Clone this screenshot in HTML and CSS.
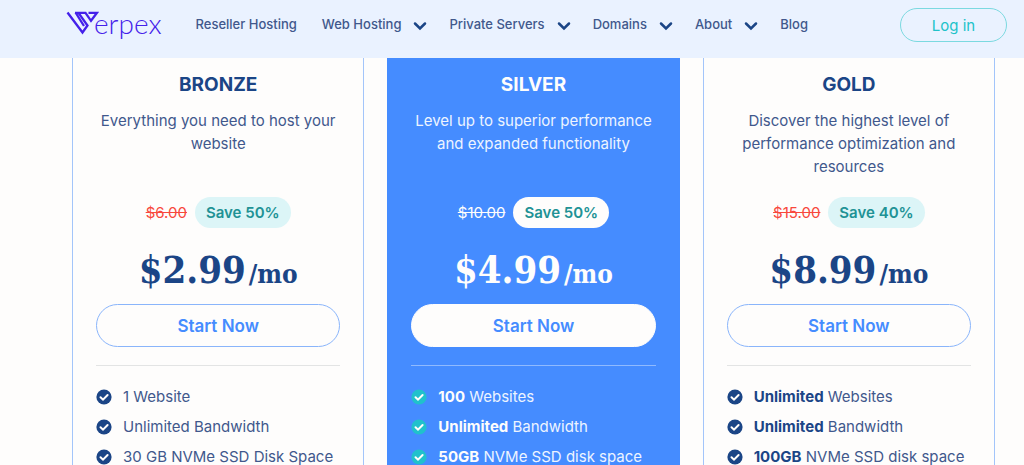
FILE: index.html
```html
<!DOCTYPE html>
<html lang="en">

<head>
    <meta charset="UTF-8">
    <meta name="viewport" content="width=device-width, initial-scale=1.0">
    <title>Verpex Hosting</title>
    <link rel="stylesheet" href="styles.css">
</head>

<body>
    <svg class="sprite" aria-hidden="true">
        <symbol id="chevron" viewBox="0 0 14 10">
            <path d="M2 2.500 7 7.500l5-5" fill="none" stroke="currentColor" stroke-width="2.500" stroke-linecap="round" />
        </symbol>
        <symbol id="check" viewBox="0 0 16 16">
            <circle cx="8" cy="8" r="7.600" fill="currentColor" />
            <path d="M4.500 8.200 7 10.600l4.600-4.600" fill="none" stroke="#fffdfb" stroke-width="2" stroke-linecap="round" />
        </symbol>
    </svg>

    <header class="header">
        <a class="logo" href="#" aria-label="Verpex">
            <svg class="logo-mark" viewBox="0 0 33 24">
                <path d="M1.500 1.500 16.500 21.500 21.500 14.500 12.500 1.800M9.500 1.500 18 15M9 1.800h10.500l5.500 8 6-8h-8.500" fill="none" stroke="currentColor" stroke-width="2.300" />
            </svg>
            <span class="logo-text">erpex</span>
        </a>
        <nav class="nav">
            <a href="#">Reseller Hosting</a>
            <a href="#">Web Hosting <svg class="chevron"><use href="#chevron" /></svg></a>
            <a href="#">Private Servers <svg class="chevron"><use href="#chevron" /></svg></a>
            <a href="#">Domains <svg class="chevron"><use href="#chevron" /></svg></a>
            <a href="#">About <svg class="chevron"><use href="#chevron" /></svg></a>
            <a href="#">Blog</a>
        </nav>
        <button class="login" type="button">Log in</button>
    </header>

    <main class="plans">
        <section class="plan">
            <h2>BRONZE</h2>
            <p class="desc">Everything you need to host your website</p>
            <div class="offer"><del>$6.00</del><span class="save">Save 50%</span></div>
            <div class="price">$2.99<span>/mo</span></div>
            <button class="start" type="button">Start Now</button>
            <ul class="features">
                <li><svg class="check"><use href="#check" /></svg><span>1 Website</span></li>
                <li><svg class="check"><use href="#check" /></svg><span>Unlimited Bandwidth</span></li>
                <li><svg class="check"><use href="#check" /></svg><span>30 GB NVMe SSD Disk Space</span></li>
            </ul>
        </section>
        <section class="plan featured">
            <h2>SILVER</h2>
            <p class="desc">Level up to superior performance and expanded functionality</p>
            <div class="offer"><del>$10.00</del><span class="save">Save 50%</span></div>
            <div class="price">$4.99<span>/mo</span></div>
            <button class="start" type="button">Start Now</button>
            <ul class="features">
                <li><svg class="check"><use href="#check" /></svg><span><b>100</b> Websites</span></li>
                <li><svg class="check"><use href="#check" /></svg><span><b>Unlimited</b> Bandwidth</span></li>
                <li><svg class="check"><use href="#check" /></svg><span><b>50GB</b> NVMe SSD disk space</span></li>
            </ul>
        </section>
        <section class="plan">
            <h2>GOLD</h2>
            <p class="desc">Discover the highest level of performance optimization and resources</p>
            <div class="offer"><del>$15.00</del><span class="save">Save 40%</span></div>
            <div class="price">$8.99<span>/mo</span></div>
            <button class="start" type="button">Start Now</button>
            <ul class="features">
                <li><svg class="check"><use href="#check" /></svg><span><b>Unlimited</b> Websites</span></li>
                <li><svg class="check"><use href="#check" /></svg><span><b>Unlimited</b> Bandwidth</span></li>
                <li><svg class="check"><use href="#check" /></svg><span><b>100GB</b> NVMe SSD disk space</span></li>
            </ul>
        </section>
    </main>
</body>

</html>
```
FILE: styles.css
```css
* {
    box-sizing: border-box;
}

body {
    margin: 0;
    background-color: #fefdfc;
    color: #41588c;
    font-family: Inter, "Liberation Sans", sans-serif;
    font-size: 15px;
    line-height: 23px;
}

.sprite {
    display: none;
}

.header {
    display: flex;
    align-items: center;
    padding: 8px 17px 16px 66px;
    background-color: #eaf2ff;
}

.logo {
    display: flex;
    align-items: center;
    align-self: flex-start;
    color: #4420ea;
    text-decoration: none;
}

.logo-mark {
    width: 33px;
    height: 24px;
    margin-right: -5px;
}

.logo-text {
    font-family: Lato, "Liberation Sans", sans-serif;
    font-size: 28px;
    font-weight: 300;
    line-height: 30px;
}

.nav {
    display: flex;
    gap: 25px;
    margin-left: 34px;
    padding-bottom: 2px;
}

.nav a {
    display: flex;
    align-items: center;
    gap: 12px;
    color: #41588c;
    font-size: 13px;
    font-weight: 500;
    text-decoration: none;
    white-space: nowrap;
}

.chevron {
    width: 14px;
    height: 10px;
    margin: 3px -3px 0 0;
    color: #1b4586;
}

.login {
    width: 107px;
    height: 34px;
    margin-left: auto;
    border: 1px solid #7bd9e0;
    border-radius: 17px;
    background: none;
    color: #21c2c9;
    font-family: inherit;
    font-size: 15px;
    cursor: pointer;
}

.plans {
    display: grid;
    grid-template-columns: repeat(3, 1fr);
    gap: 23px;
    padding: 0 29px 0 72px;
}

.plan {
    padding: 15px 23px;
    border: 1px solid #a3c5fa;
    border-top: 0;
    text-align: center;
}

.plan h2 {
    margin: 0 0 12px;
    color: #1b4586;
    font-size: 19px;
    line-height: 24px;
}

.desc {
    min-height: 69px;
    margin: 0 0 19px;
}

.offer {
    display: flex;
    justify-content: center;
    align-items: center;
    gap: 8px;
}

.offer del {
    color: #f8483c;
}

.save {
    padding: 4px 11px;
    border-radius: 16px;
    background-color: #dcf5f7;
    color: #219295;
    font-weight: 600;
}

.price {
    margin: 18px 0 6px;
    color: #1b4586;
    font-family: "DejaVu Serif Condensed", "DejaVu Serif", serif;
    font-size: 38px;
    font-weight: bold;
    line-height: 48px;
}

.price span {
    margin-left: 3px;
    font-size: 26px;
}

.start {
    display: block;
    width: 100%;
    height: 43px;
    border: 1px solid #8ab5fb;
    border-radius: 22px;
    background-color: #fefdfc;
    color: #458cff;
    font-family: inherit;
    font-size: 17px;
    font-weight: 600;
    cursor: pointer;
}

.features {
    display: grid;
    gap: 8px;
    margin: 18px 0 0;
    padding: 20px 0 0;
    border-top: 1px solid #e3e4e4;
    list-style: none;
    text-align: left;
}

.features li {
    display: flex;
    align-items: center;
    gap: 11px;
    line-height: 22px;
    white-space: nowrap;
}

.check {
    width: 16px;
    height: 16px;
    color: #1b4586;
}

.features b {
    color: #1b4586;
}

.featured {
    border-color: #458cff;
    background-color: #458cff;
    color: #edf4ff;
}

.featured h2,
.featured .price,
.featured .features b,
.featured del {
    color: #fefdfc;
}

.featured .save {
    background-color: #fefdfc;
}

.featured .start {
    border-color: #fefdfc;
}

.featured .features {
    border-color: #8fbaff;
}

.featured .check {
    color: #20c1cc;
}
```
